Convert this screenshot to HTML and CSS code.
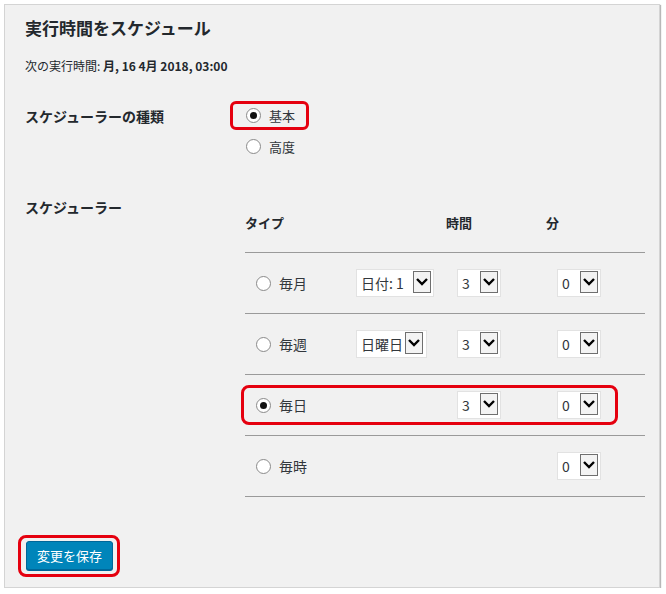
FILE: index.html
```html
<!DOCTYPE html>
<html>
<head>
    <meta charset="utf-8">
    <title>実行時間をスケジュール</title>
    <link rel="stylesheet" href="styles.css">
</head>
<body>
    <div class="panel">
        <h2 class="title">実行時間をスケジュール</h2>
        <p class="next-run">次の実行時間: <strong>月, 16 4月 2018, 03:00</strong></p>

        <div class="form-row type-row">
            <div class="form-label">スケジューラーの種類</div>
            <div class="form-field">
                <label class="radio-item marked"><span class="radio checked"></span>基本</label>
                <label class="radio-item"><span class="radio"></span>高度</label>
            </div>
        </div>

        <div class="form-row sched-row">
            <div class="form-label">スケジューラー</div>
            <div class="form-field">
                <div class="sched-head">
                    <span>タイプ</span>
                    <span></span>
                    <span>時間</span>
                    <span>分</span>
                </div>

                <div class="sched-line">
                    <label class="radio-item"><span class="radio"></span>毎月</label>
                    <div class="select w-date"><span class="select-text">日付: 1</span><span class="arrow"><svg width="16" height="18" viewBox="0 0 16 18"><path d="M3 6 L8 11 L13 6" fill="none" stroke="#000" stroke-width="2.4"/></svg></span></div>
                    <div class="select w-num"><span class="select-text">3</span><span class="arrow"><svg width="16" height="18" viewBox="0 0 16 18"><path d="M3 6 L8 11 L13 6" fill="none" stroke="#000" stroke-width="2.4"/></svg></span></div>
                    <div class="select w-num"><span class="select-text">0</span><span class="arrow"><svg width="16" height="18" viewBox="0 0 16 18"><path d="M3 6 L8 11 L13 6" fill="none" stroke="#000" stroke-width="2.4"/></svg></span></div>
                </div>

                <div class="sched-line">
                    <label class="radio-item"><span class="radio"></span>毎週</label>
                    <div class="select w-day"><span class="select-text">日曜日</span><span class="arrow"><svg width="16" height="18" viewBox="0 0 16 18"><path d="M3 6 L8 11 L13 6" fill="none" stroke="#000" stroke-width="2.4"/></svg></span></div>
                    <div class="select w-num"><span class="select-text">3</span><span class="arrow"><svg width="16" height="18" viewBox="0 0 16 18"><path d="M3 6 L8 11 L13 6" fill="none" stroke="#000" stroke-width="2.4"/></svg></span></div>
                    <div class="select w-num"><span class="select-text">0</span><span class="arrow"><svg width="16" height="18" viewBox="0 0 16 18"><path d="M3 6 L8 11 L13 6" fill="none" stroke="#000" stroke-width="2.4"/></svg></span></div>
                </div>

                <div class="sched-line marked-line">
                    <label class="radio-item"><span class="radio checked"></span>毎日</label>
                    <span></span>
                    <div class="select w-num"><span class="select-text">3</span><span class="arrow"><svg width="16" height="18" viewBox="0 0 16 18"><path d="M3 6 L8 11 L13 6" fill="none" stroke="#000" stroke-width="2.4"/></svg></span></div>
                    <div class="select w-num"><span class="select-text">0</span><span class="arrow"><svg width="16" height="18" viewBox="0 0 16 18"><path d="M3 6 L8 11 L13 6" fill="none" stroke="#000" stroke-width="2.4"/></svg></span></div>
                </div>

                <div class="sched-line">
                    <label class="radio-item"><span class="radio"></span>毎時</label>
                    <span></span>
                    <span></span>
                    <div class="select w-num"><span class="select-text">0</span><span class="arrow"><svg width="16" height="18" viewBox="0 0 16 18"><path d="M3 6 L8 11 L13 6" fill="none" stroke="#000" stroke-width="2.4"/></svg></span></div>
                </div>
            </div>
        </div>

        <div class="save-row">
            <span class="marked-btn"><button class="button">変更を保存</button></span>
        </div>
    </div>
</body>
</html>
```

FILE: styles.css
```css
*, *::before, *::after {
    margin: 0;
    padding: 0;
    box-sizing: border-box;
}

body {
    margin: 4px;
    background: #fff;
    color: #23282d;
    font-family: "Noto Sans CJK JP", "Liberation Sans", sans-serif;
}

.panel {
    width: 656px;
    height: 584px;
    padding: 11px 14px 0 20px;
    background: #f1f1f1;
    border: 1px solid #d4d4d4;
    box-shadow: 1px 1px 1px #b8b8b8;
}

.title {
    font-size: 17px;
    line-height: 24px;
    font-weight: bold;
}

.next-run {
    margin-top: 17px;
    font-size: 12px;
    line-height: 18px;
}

/* label column + field column */
.form-row {
    display: grid;
    grid-template-columns: 220px 1fr;
}

.form-label {
    font-size: 14px;
    line-height: 20px;
    font-weight: bold;
}

.type-row {
    margin-top: 26px;
}

.type-row .form-label {
    padding-top: 5px;
}

.sched-row {
    margin-top: 34px;
}

.radio-item {
    position: relative;
    display: flex;
    align-items: center;
    height: 29px;
    font-size: 13px;
    color: #32373c;
}

.type-row .radio-item {
    margin-bottom: 2px;
    padding-left: 1px;
}

.radio {
    display: inline-flex;
    align-items: center;
    justify-content: center;
    width: 15px;
    height: 15px;
    margin-right: 8px;
    border: 1px solid #8a8a8a;
    border-radius: 50%;
    background: #fff;
}

.radio.checked::before {
    content: "";
    width: 7px;
    height: 7px;
    border-radius: 50%;
    background: #111;
}

/* red annotation boxes */
.marked::after,
.marked-line::after,
.marked-btn::after {
    content: "";
    position: absolute;
    border: 3px solid #e5000f;
    pointer-events: none;
}

.marked::after {
    top: 0;
    left: -15px;
    width: 79px;
    height: 29px;
    border-radius: 6px;
}

/* schedule table */
.sched-head,
.sched-line {
    display: grid;
    grid-template-columns: 100px 101px 100px 1fr;
    align-items: center;
    border-bottom: 1px solid #9a9a9a;
}

.sched-head {
    padding: 16px 0 19px;
    font-size: 13px;
    line-height: 20px;
    font-weight: bold;
}

.sched-line {
    position: relative;
    height: 61px;
    padding-left: 11px;
}

.sched-line .radio-item {
    font-size: 14px;
}

.marked-line::after {
    top: 10px;
    left: -4px;
    width: 377px;
    height: 40px;
    border-radius: 8px;
}

.select {
    display: flex;
    align-items: flex-start;
    height: 28px;
    padding: 1px 2px 0 4px;
    background: #fff;
    border: 1px solid #e2e2e2;
    font-size: 14px;
    line-height: 24px;
    color: #32373c;
}

.select-text {
    flex: 1;
    white-space: nowrap;
}

.arrow {
    display: flex;
    align-items: center;
    justify-content: center;
    width: 18px;
    height: 22px;
    border: 1px solid #6f6f6f;
    background: #f3f3f3;
}

.w-date { width: 78px; }
.w-day { width: 71px; padding-right: 3px; }
.w-num { width: 44px; }

/* save button */
.save-row {
    margin-top: 44px;
    padding-left: 1px;
}

.marked-btn {
    position: relative;
    display: inline-block;
}

.marked-btn::after {
    top: -6px;
    left: -8px;
    width: 102px;
    height: 42px;
    border-radius: 8px;
}

.button {
    display: block;
    width: 87px;
    height: 29px;
    font-family: inherit;
    font-size: 13px;
    color: #fff;
    background: #0085ba;
    border: 1px solid #006799;
    border-radius: 3px;
    box-shadow: 0 1px 0 #006799;
    cursor: pointer;
}
```
